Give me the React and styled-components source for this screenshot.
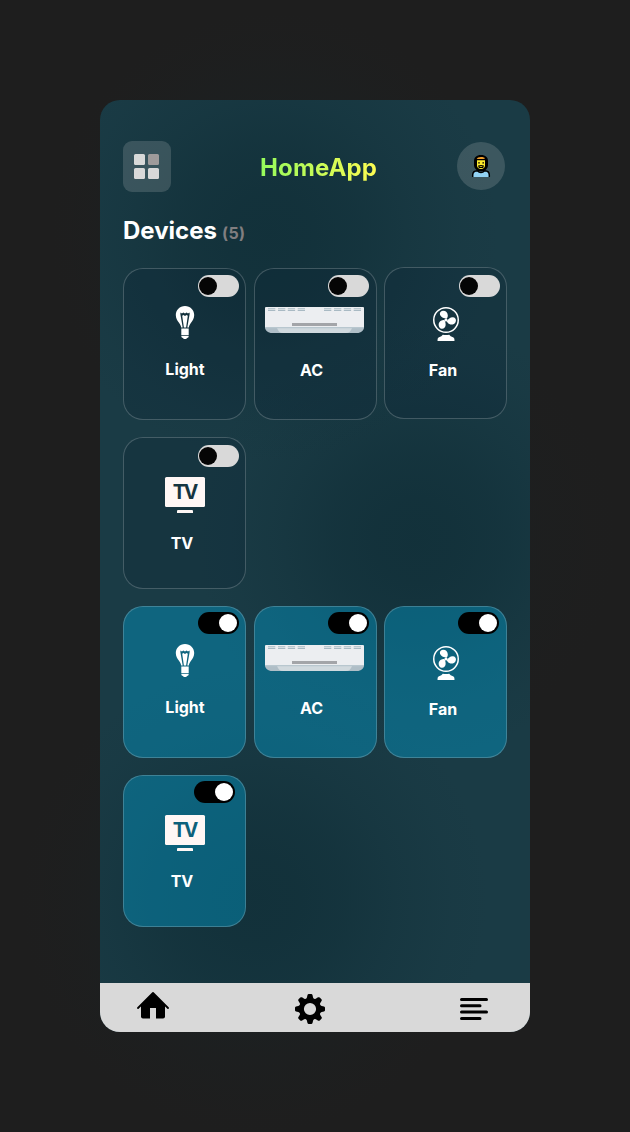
import React, { useState } from "react";
import styled, { createGlobalStyle } from "styled-components";

const GlobalStyle = createGlobalStyle`
  * { box-sizing: border-box; }
  body {
    margin: 0;
    background: #1e1e1e;
    font-family: Inter, "Liberation Sans", sans-serif;
  }
`;

const glow = (x, y, r, rgb, a) =>
  `radial-gradient(circle ${r}px at ${x}px ${y}px,
    rgba(${rgb}, ${a}) 0%, rgba(${rgb}, ${a * 0.93}) 18%, rgba(${rgb}, ${a * 0.72}) 38%,
    rgba(${rgb}, ${a * 0.35}) 62%, rgba(${rgb}, ${a * 0.1}) 84%, rgba(${rgb}, 0) 100%)`;

const Page = styled.div`
  min-height: 1132px;
  padding: 100px;
  background:
    ${glow(275, 235, 225, "16, 46, 55", 0.26)},
    ${glow(410, 540, 210, "16, 46, 55", 0.14)},
    ${glow(255, 900, 235, "16, 46, 55", 0.26)},
    #1e1e1e;
`;

const Phone = styled.main`
  display: flex;
  flex-direction: column;
  width: 430px;
  height: 932px;
  border-radius: 20px;
  overflow: hidden;
  background:
    ${glow(170, 135, 230, "16, 46, 55", 0.76)},
    ${glow(315, 440, 220, "16, 46, 55", 0.76)},
    ${glow(155, 800, 235, "16, 46, 55", 0.76)},
    #1a3b45;
`;

const Content = styled.div`
  flex: 1;
  padding: 41px 23px 0;
`;

const Header = styled.header`
  display: flex;
  justify-content: space-between;
  align-items: flex-start;
  width: 382px;
  height: 51px;
`;

const MenuButton = styled.button`
  display: grid;
  grid-template-columns: 11px 11px;
  grid-auto-rows: 11px;
  gap: 3px;
  width: 48px;
  height: 51px;
  padding: 13px 11px;
  border: 0;
  border-radius: 9px;
  background: rgba(217, 217, 217, 0.18);
`;

const MenuTile = styled.span`
  border-radius: 1.5px;
  background: ${(p) => (p.$muted ? "#9f9b9b" : "#d9d9d9")};
`;

const Title = styled.h1`
  margin: 12px 0 0 9px;
  font-size: 24px;
  line-height: 30px;
  font-weight: 700;
  letter-spacing: 0.1px;
  color: transparent;
  background: linear-gradient(90deg, #95fb5c, #fdfb52);
  background-clip: text;
  -webkit-background-clip: text;
`;

const Avatar = styled.div`
  display: flex;
  width: 48px;
  height: 48px;
  margin-top: 1px;
  padding: 12px 0 0 14px;
  border-radius: 50%;
  background: rgba(217, 217, 217, 0.18);
`;

const Heading = styled.h2`
  display: flex;
  align-items: baseline;
  gap: 5px;
  height: 30px;
  margin: 24px 0 22px;
  font-size: 24px;
  line-height: 30px;
  font-weight: 700;
  color: #fff;
`;

const Count = styled.span`
  font-size: 16px;
  letter-spacing: 0.4px;
  color: #817e80;
`;

const Grid = styled.section`
  display: grid;
  grid-template-columns: repeat(3, 123px);
  grid-auto-rows: 152px;
  gap: 17px 7.5px;
  & + & { margin-top: 17px; }
`;

const Card = styled.article`
  display: flex;
  flex-direction: column;
  margin-top: ${(p) => p.$lift || 0}px;
  height: 152px;
  border: 1px solid rgba(255, 255, 255, 0.2);
  border-radius: 20px;
  background: ${(p) => (p.$on ? "rgba(1, 164, 214, 0.4)" : "rgba(8, 34, 48, 0.22)")};
`;

const ToggleRow = styled.div`
  display: flex;
  justify-content: flex-end;
  height: 30px;
  padding: ${(p) => p.$top - 1}px ${(p) => p.$right - 1}px 0 0;
`;

const Switch = styled.button`
  display: flex;
  align-items: center;
  justify-content: ${(p) => (p.$on ? "flex-end" : "flex-start")};
  width: 41px;
  height: 22px;
  padding: 0 ${(p) => (p.$on ? 2 : 1)}px;
  border: 0;
  border-radius: 11px;
  background: ${(p) => (p.$on ? "#000" : "#d9d9d9")};
`;

const Knob = styled.span`
  width: 18px;
  height: 18px;
  border-radius: 50%;
  background: ${(p) => (p.$on ? "#fff" : "#050505")};
`;

const Figure = styled.div`
  display: flex;
  justify-content: flex-start;
  height: 60px;
  padding: ${(p) => p.$top - 31}px 0 0 ${(p) => p.$left - 1}px;
  svg { display: block; flex: none; }
`;

const Label = styled.div`
  width: ${(p) => p.$mid * 2 - 2}px;
  margin-top: ${(p) => p.$gap}px;
  font-size: 16px;
  line-height: 20px;
  font-weight: 700;
  text-align: center;
  color: #fff;
`;

const NavBar = styled.nav`
  display: flex;
  align-items: flex-start;
  height: 49px;
  padding: 9px 42px 0 37px;
  background: #d9d9d9;
  svg { display: block; }
`;

const NavItem = styled.a`
  display: block;
  margin-left: ${(p) => p.$before || 0}px;
  padding-top: ${(p) => p.$drop || 0}px;
`;

const Bulb = () => (
  <svg width="20" height="33" viewBox="0 0 20 33">
    <path
      fill="#fff"
      fillRule="evenodd"
      d="M10 0C4.700 0 .8 4 .8 9c0 3.200 1.500 5.300 3 7.600C5 18.400 6 19.800 6.200 21.600h7.600c.2-1.800 1.200-3.200 2.400-5 1.500-2.300 3-4.400 3-7.600 0-5-3.900-9-9.200-9ZM5.600 6.400 6.900 7.500l1.500-1.100L10 7.500l1.600-1.100L13 7.500l1.400-1.100.3 1.300-2.400 13.800h-1.200l1.700-11.700-1.200-.9L10 10l-1.600-1.100-1.200.9 1.700 11.700H7.700L5.300 7.700Z"
    />
    <path fill="#fff" d="M6.300 22.500h7.400v6.700H6.300zM6.300 30h7.400c0 1.300-.7 1.700-1.700 2.100l-.8.800H8.800L8 32.100c-1-.4-1.700-.8-1.700-2.100Z" />
  </svg>
);

const AirConditioner = () => (
  <svg width="99" height="26" viewBox="0 0 99 26">
    <path fill="#eceef1" d="M1 0h97q1 0 1 1v19H0V1q0-1 1-1Z" />
    <path fill="#afbec7" d="M0 20h99c0 3.500-3 6-7 6H7c-4 0-7-2.500-7-6Z" />
    <path fill="#d0d9de" d="M12 21h75c-1 3-3 5-6 5H18c-3 0-5-2-6-5Z" />
    <path fill="#b8c7cf" d="M0 20h99v1.300H0z" />
    <path fill="#a3a5a9" d="M27 16h45v3H27z" />
    {[3, 13, 22.800, 32.700, 59, 69, 78.800, 88.700].map((x) => (
      <g key={x}>
        <path fill="#b9c7cf" d={`M${x} 1h7.300v1h-7.300z`} />
        <path fill="#d6dee2" d={`M${x} 2h7.300v1h-7.300z`} />
        <path fill="#a9bac4" d={`M${x} 3h7.300v1h-7.300z`} />
      </g>
    ))}
  </svg>
);

const Fan = () => (
  <svg width="26" height="34" viewBox="0 0 26 34">
    <circle cx="13" cy="13" r="12.250" fill="none" stroke="#fff" strokeWidth="1.500" />
    <circle cx="13" cy="13" r="1.600" fill="#fff" />
    {[0, 120, 240].map((a) => (
      <path
        key={a}
        fill="#fff"
        transform={`rotate(${a} 13 13)`}
        d="M13.600 11.700C11.300 11.600 8 10.500 7.100 8.100 6.300 5.900 7.500 3.900 9.800 3.700c3-.2 4.900 1.900 5 4.500.1 1.500-.4 2.600-1.200 3.500Z"
      />
    ))}
    <path fill="#fff" d="M9.800 27.800q3.200.6 6.400 0l1.500 1.400 2.800 1.300q1.200.9 1 3.500H4.500q-.2-2.600 1-3.500l2.800-1.300Z" />
  </svg>
);

const ScreenStack = styled.div`
  display: flex;
  flex-direction: column;
  align-items: center;
  gap: 3px;
  width: 40px;
`;

const Screen = styled.div`
  width: 40px;
  height: 30px;
  border-radius: 1.5px;
  background: #fff7f5;
  color: ${(p) => (p.$on ? "#0d617b" : "#15343f")};
  font-size: 19.5px;
  line-height: 31px;
  font-weight: 700;
  letter-spacing: -2px;
  text-indent: -1px;
  text-align: center;
`;

const Stand = styled.div`
  width: 16px;
  height: 3px;
  border-radius: 1px 1px 0 0;
  background: #fff7f5;
`;

const Television = ({ on }) => (
  <ScreenStack>
    <Screen $on={on}>TV</Screen>
    <Stand />
  </ScreenStack>
);

const Person = () => (
  <svg width="20" height="24" viewBox="0 0 20 24">
    <path fill="#92d3f5" d="M2 23v-2.500Q2 17 6 17h8q4 0 4 3.500V23Z" />
    <path d="M1.700 23v-2c0-3 1.600-4.200 4.500-4.300Q10 20 13.800 16.700c2.900.1 4.500 1.300 4.500 4.300v2" fill="none" stroke="#000" strokeWidth="1.500" />
    <path d="M10 1C5.500 1 3 3.400 3 7v4C3 14.500 6 17.500 10 17.500s7-3 7-6.500V7c0-3.600-2.500-6-7-6Z" />
    <path fill="#fcea2b" d="M6 6.200h8v5.300c0 2-1.600 3.500-4 3.500s-4-1.500-4-3.500Z" />
    <path fill="#f1a02b" d="M5.700 5C6.200 3.600 7.600 2.900 10 2.900c2.300 0 3.500.5 4 1.500l-1.500.6Z" />
    <path d="M7.200 8.200h1.600v1.300H7.200zM11.400 8.200H13v1.300h-1.600zM7 11.600q3-1.200 6 0L12.200 14H7.800Z" />
    <path fill="#fcea2b" d="M8.700 12.200h2.600v.7H8.700z" />
  </svg>
);

const Home = () => (
  <svg width="32" height="27" viewBox="0 0 32 27">
    <path d="M1 16 16 1l15 15" fill="none" stroke="#000" strokeWidth="1.800" strokeLinecap="round" strokeLinejoin="round" />
    <path d="M16 1.500 28 13v11.500q0 2-2 2h-7v-10.500h-6v10.500H6q-2 0-2-2V13Z" />
  </svg>
);

const Gear = () => (
  <svg width="30" height="30" viewBox="-15 -15 30 30">
    <circle r="8.600" fill="none" stroke="#000" strokeWidth="5" />
    {[0, 45, 90, 135, 180, 225, 270, 315].map((a) => (
      <path
        key={a}
        transform={`rotate(${a})`}
        d="M-4.300-9.500C-2.800-11-3-12.500-2.500-14Q-2.200-15-1.200-15H1.200Q2.200-15 2.500-14C3-12.500 2.800-11 4.300-9.500Z"
      />
    ))}
  </svg>
);

const Lines = () => (
  <svg width="28" height="22" viewBox="0 0 28 22">
    <path d="M1.500 1.500h25M1.500 7.800h18.500M1.500 14.100h25M1.500 20.400h18.500" stroke="#000" strokeWidth="3" strokeLinecap="round" />
  </svg>
);

const KINDS = {
  Light: { Icon: Bulb, left: 52, top: 38, mid: 62, gap: 0 },
  AC: { Icon: AirConditioner, left: 11, top: 39, mid: 58, gap: 1 },
  Fan: { Icon: Fan, left: 49, top: 40, mid: 59, gap: 2 },
  TV: { Icon: Television, left: 42, top: 40, mid: 59, gap: 5 },
};

const GROUPS = [
  [
    { name: "Light", on: false, top: 7, right: 7 },
    { name: "AC", on: false, top: 7, right: 8 },
    { name: "Fan", on: false, top: 8, right: 7, lift: -1 },
    { name: "TV", on: false, top: 8, right: 7 },
  ],
  [
    { name: "Light", on: true, top: 6, right: 7 },
    { name: "AC", on: true, top: 6, right: 8 },
    { name: "Fan", on: true, top: 6, right: 8 },
    { name: "TV", on: true, top: 6, right: 11 },
  ],
];

function Device({ name, on: initial, top, right, lift }) {
  const [on, setOn] = useState(initial);
  const { Icon, ...kind } = KINDS[name];
  return (
    <Card $on={on} $lift={lift}>
      <ToggleRow $top={top} $right={right}>
        <Switch $on={on} aria-label={name} onClick={() => setOn(!on)}>
          <Knob $on={on} />
        </Switch>
      </ToggleRow>
      <Figure $left={kind.left} $top={kind.top}>
        <Icon on={on} />
      </Figure>
      <Label $mid={kind.mid} $gap={kind.gap}>{name}</Label>
    </Card>
  );
}

export default function App() {
  return (
    <>
      <GlobalStyle />
      <Page>
        <Phone>
          <Content>
            <Header>
              <MenuButton aria-label="Menu">
                <MenuTile />
                <MenuTile $muted />
                <MenuTile />
                <MenuTile />
              </MenuButton>
              <Title>HomeApp</Title>
              <Avatar><Person /></Avatar>
            </Header>
            <Heading>Devices <Count>(5)</Count></Heading>
            {GROUPS.map((group, i) => (
              <Grid key={i}>
                {group.map((d) => <Device key={d.name} {...d} />)}
              </Grid>
            ))}
          </Content>
          <NavBar>
            <NavItem><Home /></NavItem>
            <NavItem $drop={2} $before={126}><Gear /></NavItem>
            <NavItem $drop={6} $before={135}><Lines /></NavItem>
          </NavBar>
        </Phone>
      </Page>
    </>
  );
}
